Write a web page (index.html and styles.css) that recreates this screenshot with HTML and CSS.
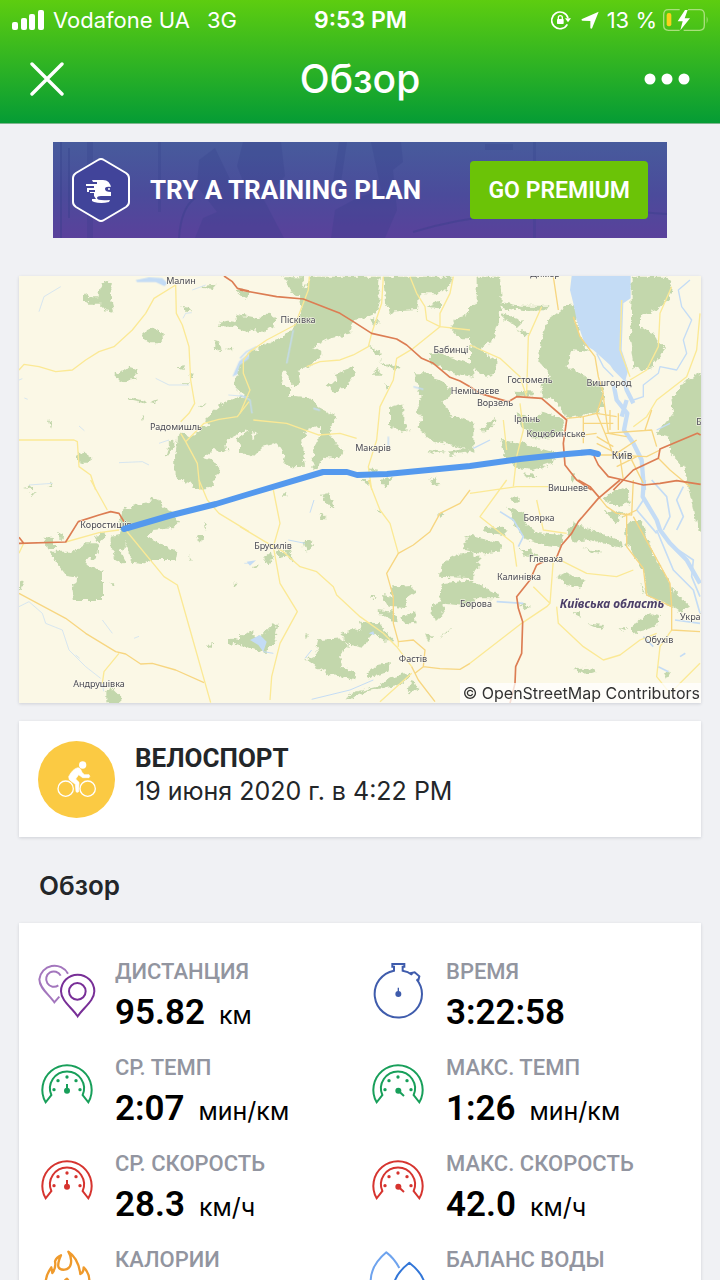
FILE: index.html
```html
<!DOCTYPE html>
<html lang="ru">
<head>
<meta charset="utf-8">
<meta name="viewport" content="width=device-width, initial-scale=1">
<title>Обзор</title>
<link rel="stylesheet" href="styles.css">
</head>
<body>
<div class="app">
  <header class="top">
    <div class="status">
      <div class="status-left">
        <svg class="signal" viewBox="0 0 32 20" aria-hidden="true"><rect x="0" y="12" width="6" height="8" rx="2"/><rect x="9" y="8" width="6" height="12" rx="2"/><rect x="17" y="4" width="6" height="16" rx="2"/><rect x="26" y="0" width="6" height="20" rx="2"/></svg>
        <span>Vodafone UA</span><span class="network">3G</span>
      </div>
      <span class="clock">9:53 PM</span>
      <div class="status-right">
        <svg class="lock" viewBox="0 0 60 60" aria-hidden="true"><path d="M49 43A25 25 0 1 1 51 24" fill="none" stroke="#fff" stroke-width="5"/><path d="M42 25h18l-9 12z"/><rect x="18" y="27" width="20" height="15" rx="2"/><path d="M22 28v-5a6 6 0 0 1 12 0v5" fill="none" stroke="#fff" stroke-width="4"/></svg>
        <svg class="arrow" viewBox="0 0 52 52" aria-hidden="true"><path d="M51 2L32 50q-3 3-5-1V29L4 28q-5-2-1-5z"/></svg>
        <span>13 %</span>
        <svg class="battery" viewBox="0 0 138 66" aria-hidden="true"><path d="M50 2H16Q2 2 2 17v32q0 15 14 15h34M75 2h35q14 0 14 15v32q0 15-14 15H62" fill="none" stroke="#a9e07c" stroke-width="4"/><path d="M131 22q6 11 0 22z" fill="#a9e07c"/><rect x="11" y="12" width="14" height="40" rx="6" fill="#f8d21c"/><path d="M66 3L44 37h15l-7 27 29-36H65L74 3z"/></svg>
      </div>
    </div>
    <div class="nav">
      <button class="icon-btn" aria-label="Закрыть"><svg class="close" viewBox="0 0 34 34"><path d="M2 2L32 32M32 2L2 32" stroke="#fff" stroke-width="3.4" stroke-linecap="round"/></svg></button>
      <h1>Обзор</h1>
      <button class="icon-btn" aria-label="Ещё"><svg class="more" viewBox="0 0 46 12"><circle cx="6" cy="6" r="5.5"/><circle cx="23" cy="6" r="5.5"/><circle cx="40" cy="6" r="5.5"/></svg></button>
    </div>
  </header>

  <main class="content">
    <section class="promo">
      <svg class="promo-art" viewBox="0 0 614 96" preserveAspectRatio="xMidYMid slice" aria-hidden="true">
        <g fill="#2f3a86" opacity=".2"><path d="M190 0h38l4 34-16 18-24-8-8-20z"/><path d="M146 18l16-12 24 50 24 0 22 42-10 28h-64l-16-30 8-20 14-6-20-26z"/><path d="M286 0h8l-6 40h-8zM318 0h30l2 20-10 8 4 40-12 28h-54l4-28 22-12 24-8z"/><path d="M34 0h6v96h-6zM105 0h3v70h-3zM480 0h3v96h-3zM432 2h28v6h-28z"/></g>
        <path d="M360 90Q460 60 614 72M8 0v96M16 6v70M126 96q2-30 16-40" fill="none" stroke="#2f3a86" stroke-width="2" opacity=".3"/>
      </svg>
      <svg class="promo-logo" viewBox="0 0 58 66" aria-hidden="true">
        <path d="M26 3q3-2 6 0l22 13q3 2 3 5v24q0 3-3 5L32 63q-3 2-6 0L4 50q-3-2-3-5V21q0-3 3-5z" fill="#41449a" stroke="#fff" stroke-width="2"/>
        <path d="M20 23h11q7 0 8 8v8H29q-4 0-4 2 0 3 13 2l-1 2q-8 2-15 0l-2-1v-2h4l-2-3v-3h-4v-1h5v-2h-8v-2h7v-2h-4v-2h7v-2h-4z" fill="#fff"/>
        <path d="M14 28h4M15 34h2" stroke="#fff" stroke-width="2"/><path d="M39 30q-6-1-6 2t6 3z" fill="#41449a"/><circle cx="37" cy="32" r="1" fill="#fff"/>
      </svg>
      <span class="promo-text">TRY A TRAINING PLAN</span>
      <button class="premium">GO PREMIUM</button>
    </section>

    <section class="card map">
      <svg viewBox="19 276 682 427" role="img" aria-label="Маршрут от Коростишева до Киева">
        <defs><filter id="ragged" x="0" y="0" width="1" height="1" color-interpolation-filters="sRGB"><feTurbulence type="fractalNoise" baseFrequency=".18" numOctaves="3" seed="4"/><feDisplacementMap in="SourceGraphic" scale="7" xChannelSelector="R" yChannelSelector="G"/></filter></defs>
        <rect x="19" y="276" width="682" height="427" fill="#fbf8e6"/>
        <g class="forest" filter="url(#ragged)">
          <path transform="translate(19 270) scale(.33333)" d="M248 40l20-8 12 14-6 22 4 30 8 30-30-4-8-20-40 0-16-14 0-14 12-4 8 10h26zM370 190l30-14 34 14 0 16-14 14-26 0-24-14zM290 310l20-8 18-12 28 8-10 16 4 12-26 4-20 6-14-8zM330 382l50 12 0 7-48-10zM392 396l22-8-6 12zM490 108l20 2 6 14-14-2zM595 160l30-8 65 10 0 24-40-14-50-4zM586 210l14 4 8 24-14 8-8-20zM622 232l20 8-14 2zM550 48l40-4-10 12-28-2zM645 60l45 4v24l-20-6zM172 556l24-8 20 14-4 16-30 0zM700 255L660 285 645 345 672 370 700 375zM700 380L660 380 612 400 555 450 570 460 530 490 510 500 490 488 478 495 468 560 470 620 500 640 520 630 560 660 580 640 600 600 585 570 555 560 580 540 625 545 620 510 650 495 700 470zM440 560l10-40 16-12 0 20-20 28zM655 505l45-30v90l-30-20zM88 445l12 15-4 14zM475 292l20-6-4 14zM512 310h8v14h-8zM484 340l30 0-10 5zM540 410l20-12-10 14zM368 438l8-2-4 16zM12 655l30-8 0 10zM88 645l16-8-6 12z"/>
          <path transform="translate(240 270) scale(.33333)" d="M210 20L420 20 415 60 425 90 405 130 370 145 340 150 330 190 270 205 220 230 250 250 210 290 175 300 180 340 160 350 150 330 130 295 120 340 150 350 150 380 210 385 240 415 290 440 285 460 270 470 275 500 310 545 300 565 250 560 235 595 217 595 220 535 240 500 240 465 200 480 185 520 195 590 160 592 130 580 135 555 110 520 70 530 40 560 20 545 0 545 0 500 40 510 50 490 20 480 36 460 36 400 10 370 0 370 0 280 30 250 60 230 130 200 165 165 185 120 180 80zM-10 132L60 145 80 125 105 140 100 170 70 185 -10 172zM130 22l60 0 0 60-30-10zM430 20L635 20 630 45 600 70 540 70 530 120 450 125 435 90zM700 130L650 145 630 175 660 205 700 205zM570 250L600 250 700 285 700 320 640 310 600 290 570 275zM520 310l50 0 20 20 30 10 20 30-30 25 20 40 70 20v90l-60-20-60-10-50-40 20-30-20-25 15-40zM285 315l60-25 0 15-30 50-40 10-15-20 30-10zM385 225l40 25-10 10zM415 270l70 25-20 10zM450 410l40-10 0 60 20 20-30 5-30-20zM420 630l40-8-15 22-25-2zM565 630l20-8 12 20-20 4zM390 150l15-5 12 14-12 6zM410 290l12 24-24 0zM560 110l40-15 0 20zM430 345l20 0-12 14zM385 595l30 4-10 14zM560 540l60 5-40 6zM620 545l70-10 0 12-60 8z"/>
          <path transform="translate(470 270) scale(.33333)" d="M20 20L90 20 95 90 85 160 70 210 25 240 0 220 0 110 20 100zM0 225L35 245 80 270 75 310 50 320 0 290zM90 95l60 12 90 0-20 14-60 2-60-8zM100 130l60 25-20 20-10-15-30-10zM145 180l30 10-10 10zM235 150L300 100 325 130 320 160 345 230 360 245 300 240 290 290 350 320 365 330 400 345 400 410 380 430 290 445 280 420 240 385 215 380 215 340 240 320 205 275 215 200zM485 20L590 20 605 50 600 80 560 120 510 140 510 175 550 190 585 240 545 290 520 300 490 290 480 200 485 90zM700 305L640 340 600 395 610 430 560 490 600 500 600 550 640 590 660 650 700 660zM215 425l60 20 10 40-50 20-50 0-20-30zM140 430l50 20-10 30-30-10zM135 362l60 3-5 14-55 2zM90 510l70 10 100 30-10 30-60 20-50-6-40-40zM35 480l40-40-6 30-30 20zM300 610l14 10-8 20zM160 610l40 5-20 15z"/>
          <path transform="translate(19 480) scale(.33333)" d="M105 215L160 215 200 190 235 190 240 215 225 240 200 235 200 255 252 272 252 360 165 360 160 325 178 290 140 285 95 225zM310 90L330 80 390 65 400 50 420 60 430 80 460 95 480 125 460 145 400 150 390 170 400 180 475 215 470 240 400 240 380 250 335 245 335 215 320 190 305 215 320 245 295 250 275 200 275 170 300 165zM75 170l30 5 0 30-25 0zM120 155l12 15-12 10zM225 165l30-5 5 10-20 20zM535 165l20 0-10 20zM505 0h60l-10 30-30-5zM630 475l30 5 40-30v50l-70-10zM560 495l22-2 0 14zM0 305l14-5-6 25-8 3zM262 630l16-8 29 28v20h-45zM275 310l14 0-10 12zM510 220l8 22-4 0zM30 40l20 0-8 8zM645 308h12v8h-12zM555 130l12 6-10 10z"/>
          <path transform="translate(240 480) scale(.33333)" d="M70 235l25-20 5 20-15 20zM110 215l20-5 8 20-20 5zM135 210l15 0 12 32-25-15zM0 465l60 5 40-40 15 5-15 60-25 25-75-30zM305 460L365 445 360 425 415 430 460 480 440 485 400 460 370 500 320 490zM235 480L310 475 325 500 300 520 305 560 350 580 345 600 260 580 195 540 235 520 230 500zM380 580l30-25 40-5-5 25-60 20zM330 640l80-20 40-25 60-15-20 30-110 25-60 25zM500 630l20-30 15 30-25 10zM450 320l60-5 20 20-30 20 0 30-55-5-20-35 30 5zM412 390l50 5 10 35-40-20zM480 410l45-20 5 40-35 0zM700 180l-30 10 5 20 25 5zM700 215L650 225 605 250 600 290 700 295zM605 310L700 300 700 380 600 370zM575 375l30-10 10 30-20 25-20-15zM240 45l25-5 20 45-30-20zM235 100l30 15-20 0zM190 180l10 0 20 15-20 20zM425 0h35l-20 20zM360 0h30l-5 15zM555 460l22 10-10 20zM600 475l30-30-5 12zM388 348l20 0-14 8zM36 262l22-6-12 14zM130 40h12v10h-12zM595 98l12 8-10 8zM195 460l8 6-6 14zM410 86l10 6-6 6z"/>
          <path transform="translate(470 480) scale(.33333)" d="M-10 165L95 190 90 215 40 220 -10 210zM-10 230h35l0 40-35 8zM-10 298l100 47-10 10-90 0zM40 145l60-5 10 25-60-5zM115 80l50 20 0 30 40 30 80 5-15 35-50-6-60-20-20-30zM290 155l20-25 60 20 90 40 0 15-100-25-50 5zM465 150l20-30 30 0 30 90 60 110 5 60-80-30-10-80-50-80zM610 330l50 50-30 15-30-20zM650 0h60v170l-30-30-10-50zM480 440l60-40 30 5-20 40-60 15zM350 430l50 5-5 15zM300 395l30 5 0 10zM315 570l30-10 35 15-30 10zM265 290l20-10 65 20-20 20-40-5zM420 40l50-20 10 50-30 10-50-20zM575 580l25-5-15 25zM150 210l30 0 30 20-40 0zM145 370l35 10-15 8zM120 55l20-6 10 16-14 4zM340 205l60 10-20 6zM510 310l16 30-8 0zM445 445l30 0-10 8zM400 90l60 10-20 30z"/>
        </g>
        <g class="water">
          <path transform="translate(470 270) scale(.33333)" d="M305 18L482 18 482 85 460 100 455 240 475 300 465 335 430 300 420 285 370 240 345 225 320 150 310 100 300 60z"/>
          <path transform="translate(19 270) scale(.33333)" d="M350 30l40-8 40 2 16 16-10 8-26-12-56 0zM690 250l-30 24-20 46 14-6 8-28 28-20z"/>
          <path transform="translate(240 480) scale(.33333)" d="M30 480l30-15 20 20-10 30-15-20zM20 245l28-4-18 16zM386 460l14-6 4 12z"/>
        </g>
        <g class="river">
          <path transform="translate(470 270) scale(.33333)" stroke-width="13" d="M462 330L470 360 490 400M430 340L440 390 472 430 462 480 490 520 515 570 522 660M470 390L455 440"/>
          <path transform="translate(470 270) scale(.33333)" stroke-width="4" d="M660 30L625 60 635 110 665 150 640 210 650 250 620 300 570 290 565 310 520 345 520 380 490 390M380 250L400 290 430 320M10 535L60 510M560 480L600 460"/>
          <path transform="translate(470 480) scale(.33333)" stroke-width="13" d="M522 0L518 50 560 120 570 150 600 190 650 240 690 310"/>
          <path transform="translate(470 480) scale(.33333)" stroke-width="5" d="M545 0L590 50 600 110 580 150M560 150L610 270 670 330 690 400M610 200L670 240 665 290 690 350M520 60L500 90 560 160M640 20L620 60 640 110 620 150M615 420L690 430M90 95L130 120 160 170 145 200M80 365L160 370M520 470l30 30M565 560l30 15M630 530l16-10"/>
          <path transform="translate(19 480) scale(.33333)" stroke-width="2" d="M0 380L30 365 70 400 80 430 130 450 150 510 200 560 245 595M250 420L280 460M345 475l15-6M250 610l4 24M170 525l12 10M690 250h-14"/>
          <path transform="translate(240 480) scale(.33333)" stroke-width="3" d="M210 98L222 60M70 515L100 520M195 535L215 510M215 658L330 630 400 600M145 180l50 10"/>
          <path transform="translate(240 270) scale(.33333)" stroke-width="4" d="M0 265L20 245 50 230M0 375L30 390 36 430M140 280L160 180M445 500v30M520 350l30 8M220 415l20 6"/>
          <path transform="translate(19 270) scale(.33333)" stroke-width="2" d="M492 145L500 130 518 128M628 375L690 380M60 125L75 80 125 50M0 330l10-4M16 384l10 4M180 468l16 14M560 45L520 60M410 325L450 345 510 345M300 578L370 575 390 585M420 520L450 510M30 645L100 640"/>
        </g>
        <g class="road">
          <path transform="translate(19 270) scale(.33333)" d="M0 300L15 283 60 290 110 305 160 300 200 270 240 245 285 230 340 180 380 130 405 85 470 45L472 130 490 165 510 230 515 330 527 400 510 430 485 455M0 510L165 510 175 515 180 590 215 615 230 660M690 395L655 440 600 448 555 460 500 515 535 580 543 660M500 515l-15-25"/>
          <path transform="translate(240 270) scale(.33333)" d="M208 20L205 60 165 165 80 210 30 245 10 270 10 310 30 360 0 430M40 450L140 460 235 495 300 490 350 505M395 190L425 100 430 20M395 190L385 230 340 255 300 270 240 275 200 290M510 20L530 70 555 110 560 150 600 170 690 180M600 170L600 130 630 70 640 20M600 170L520 235 470 265 460 330 420 410 410 510 385 590 395 660"/>
          <path transform="translate(470 270) scale(.33333)" d="M170 370L175 200 215 110M0 225L90 265 150 320 170 380M605 50L570 130 565 230 530 300 480 330M690 130L680 240 650 320 560 390 530 440 490 470M455 90L450 240 480 320M150 400L160 480 140 560 130 650M100 450L110 540"/>
          <path transform="translate(19 480) scale(.33333)" d="M215 0L265 90M140 186L240 158 300 150M320 150L435 290 475 315 575 668M300 520L255 575 250 610M540 0L565 60 600 100 690 155M0 220l14-30"/>
          <path transform="translate(240 480) scale(.33333)" d="M0 140L75 185 130 215 180 260 230 275 280 320 290 345 360 410 430 460 470 500 515 560M100 30L120 130 100 200 120 310 172 395 120 490 95 590 90 660M385 0L420 90 450 130 475 220M515 580L420 665M475 485v15"/>
          <path transform="translate(470 480) scale(.33333)" d="M250 240L240 370 230 380 155 430 0 550M240 370L190 320M260 380L265 430 340 500 400 540 450 525 510 480 560 460M250 230L350 280 440 290 490 270M0 40L140 20 240 20M110 0L30 110 130 190 140 260M605 450L570 500 560 590 600 640 690 550M200 60l20 90 70 10"/>
        </g>
        <g class="road secondary">
          <path transform="translate(470 270) scale(.33333)" d="M250 20L265 120M310 140L330 200 375 260 385 320 400 370 380 430 405 490 430 555M290 445L340 440 380 430 440 440M405 490L545 480 560 530M390 555L430 555 530 560 570 540M565 565L600 600 660 650M400 380L415 490 470 500M340 460h90M380 500l50 30M420 420v60M445 430v50M300 500l80-10M450 560l10 70M480 560l40 80M440 590l60-30M545 420l-20 60M380 520l60 30 60-40M340 440v80"/>
          <path transform="translate(470 480) scale(.33333)" d="M470 100L470 200 520 265 530 345 605 380 605 450 690 455M390 55L410 80 440 100 485 105 490 0M490 110L600 310 605 380M460 110l40-20"/>
          <path transform="translate(19 480) scale(.33333)" d="M0 340L140 415 200 460 290 515 320 522 365 552 400 550 470 570 555 608"/>
          <path transform="translate(240 480) scale(.33333)" d="M690 30L660 70 600 100 570 155 520 195 475 220 440 280 460 350 460 430 475 485 520 480 555 510 550 560 525 580M550 560L600 566 660 568 690 550M515 560L535 600 585 665"/>
        </g>
        <g class="highway">
          <path transform="translate(19 270) scale(.33333)" d="M615 18L640 35 655 55 690 63"/>
          <path transform="translate(240 270) scale(.33333)" d="M0 60L110 80 190 87 300 130 340 155 395 190 470 207 500 225 545 265 580 280 630 322 660 333 690 350"/>
          <path transform="translate(470 270) scale(.33333)" d="M0 350L30 370 90 388 115 395 140 380 215 385 290 450 280 520 285 585 320 630 365 660M372 558L385 585 415 620 460 630 520 645 570 640 620 632 692 643M692 495L682 490 570 537 565 565 490 600 430 660"/>
          <path transform="translate(19 480) scale(.33333)" d="M0 172L14 190M0 190L140 186 178 125 240 105 275 95 300 100 315 125"/>
          <path transform="translate(470 480) scale(.33333)" d="M325 0L360 20 390 55M450 0L385 55 325 125 305 160 275 195 260 232M220 245L200 255 180 300 140 350 145 385 158 425 155 520 137 560 135 610 120 670"/>
        </g>
        <g class="places">
          <text x="181" y="284">Малин</text><text x="298" y="323">Пісківка</text><text x="451" y="353">Бабинці</text><text x="475" y="394">Немішаєве</text><text x="495" y="406">Ворзель</text><text x="530" y="383">Гостомель</text><text x="609" y="386">Вишгород</text><text x="527" y="422">Ірпінь</text><text x="556" y="437">Коцюбинське</text><text class="city" x="622" y="459">Київ</text><text x="176" y="430">Радомишль</text><text x="373" y="451">Макарів</text><text x="568" y="491">Вишневе</text><text x="539" y="521">Боярка</text><text x="546" y="562">Глеваха</text><text x="519" y="580">Калинівка</text><text x="476" y="607">Борова</text><text x="106" y="528">Коростишів</text><text x="273" y="549">Брусилів</text><text x="413" y="662">Фастів</text><text x="99" y="687">Андрушівка</text><text x="659" y="643">Обухів</text><text x="699" y="620">Українка</text><text x="715" y="425">Бровари</text><text x="545" y="277">Димер</text>
          <text class="region" x="612" y="608">Київська область</text>
        </g>
        <path d="M124 529L172 515 216 504 249 494 323 472 347 472 357 475 387 474 470 466 520 459 567 454 590 452 598 454" fill="none" stroke="#5499ee" stroke-width="6" stroke-linecap="round" stroke-linejoin="round"/>
      </svg>
      <small class="credit">© OpenStreetMap Contributors</small>
    </section>

    <section class="card activity">
      <svg class="badge" viewBox="0 0 231 231" aria-hidden="true">
        <circle cx="115.500" cy="115.500" r="115.500" fill="#fbca43"/>
        <g fill="none" stroke="#fff" stroke-width="4"><circle cx="83" cy="143" r="23"/><circle cx="149" cy="143" r="23"/></g>
        <circle cx="134" cy="72" r="11" fill="#fff"/>
        <path d="M92 107q12-24 28-27 8 0 12 14l7 7h14q5 5 0 9h-19l-12-9-9 13 10 10-1 28q-4 4-8 0l-2-22-18-14z" fill="#fff" stroke="#fff" stroke-width="2" stroke-linejoin="round"/>
      </svg>
      <div class="activity-text"><h2>ВЕЛОСПОРТ</h2><p>19 июня 2020 г. в 4:22 PM</p></div>
    </section>

    <h2 class="section-title">Обзор</h2>

    <section class="card stats">
      <div class="stat">
        <svg viewBox="54 60 180 180" fill="none" stroke-width="6" aria-hidden="true"><path d="M147 101A46 46 0 0 0 61 118C61 145 92 165 106 187L121 170M125 107A23 23 0 1 0 118 136" stroke="#a376bd"/><path d="M176 229C160 204 126 182 126 154A50 50 0 0 1 226 154C226 182 192 204 176 229z" stroke="#782f97"/><circle cx="175" cy="154" r="25" stroke="#782f97"/></svg>
        <div><h3>ДИСТАНЦИЯ</h3><p><strong>95.82</strong><span>км</span></p></div>
      </div>
      <div class="stat">
        <svg viewBox="54 60 180 180" fill="none" stroke="#3f5cac" stroke-width="6" aria-hidden="true"><path d="M132 92V80H127V72H163V80H158V92Q174 94 186 104L184 99 194 97 208 109 205 121 200 118Q216 138 216 162A71 71 0 1 1 132 92z"/><circle cx="145" cy="162" r="6" fill="#3f5cac"/><path d="M145 160V143" stroke-width="4"/></svg>
        <div><h3>ВРЕМЯ</h3><p><strong>3:22:58</strong></p></div>
      </div>
      <div class="stat pace">
        <svg viewBox="54 348 180 180" aria-hidden="true"><path class="arc" d="M80 487A74 74 0 1 1 208 487L191 465A51 51 0 1 0 97 465z"/><g class="dots"><circle cx="105" cy="449" r="5"/><circle cx="117" cy="422" r="5"/><circle cx="144" cy="411" r="5"/><circle cx="171" cy="422" r="5"/><circle cx="183" cy="449" r="5"/><circle cx="144" cy="452" r="9"/></g><path class="needle" d="M144 452V432"/></svg>
        <div><h3>СР. ТЕМП</h3><p><strong>2:07</strong><span>мин/км</span></p></div>
      </div>
      <div class="stat pace">
        <svg viewBox="54 348 180 180" aria-hidden="true"><path class="arc" d="M80 487A74 74 0 1 1 208 487L191 465A51 51 0 1 0 97 465z"/><g class="dots"><circle cx="105" cy="449" r="5"/><circle cx="117" cy="422" r="5"/><circle cx="144" cy="411" r="5"/><circle cx="171" cy="422" r="5"/><circle cx="183" cy="449" r="5"/><circle cx="145" cy="452" r="9"/></g><path class="needle" d="M145 452L162 468"/></svg>
        <div><h3>МАКС. ТЕМП</h3><p><strong>1:26</strong><span>мин/км</span></p></div>
      </div>
      <div class="stat speed">
        <svg viewBox="54 348 180 180" aria-hidden="true"><path class="arc" d="M80 487A74 74 0 1 1 208 487L191 465A51 51 0 1 0 97 465z"/><g class="dots"><circle cx="105" cy="449" r="5"/><circle cx="117" cy="422" r="5"/><circle cx="144" cy="411" r="5"/><circle cx="171" cy="422" r="5"/><circle cx="183" cy="449" r="5"/><circle cx="144" cy="452" r="9"/></g><path class="needle" d="M144 452V432"/></svg>
        <div><h3>СР. СКОРОСТЬ</h3><p><strong>28.3</strong><span>км/ч</span></p></div>
      </div>
      <div class="stat speed">
        <svg viewBox="54 348 180 180" aria-hidden="true"><path class="arc" d="M80 487A74 74 0 1 1 208 487L191 465A51 51 0 1 0 97 465z"/><g class="dots"><circle cx="105" cy="449" r="5"/><circle cx="117" cy="422" r="5"/><circle cx="144" cy="411" r="5"/><circle cx="171" cy="422" r="5"/><circle cx="183" cy="449" r="5"/><circle cx="145" cy="452" r="9"/></g><path class="needle" d="M145 452L162 468"/></svg>
        <div><h3>МАКС. СКОРОСТЬ</h3><p><strong>42.0</strong><span>км/ч</span></p></div>
      </div>
      <div class="stat">
        <svg viewBox="54 924 180 180" fill="none" stroke="#ef9a2c" stroke-width="7" stroke-linejoin="round" aria-hidden="true"><path d="M140 1084C96 1080 76 1050 81 1018Q84 1000 97 982L100 999Q112 984 108 964 112 952 126 946 116 968 118 980C124 994 150 992 155 974Q160 954 148 935 178 954 184 1002 194 998 194 982 212 1000 211 1024C208 1060 180 1082 140 1084zM124 1050Q122 1034 144 1016 160 1036 156 1056"/></svg>
        <div><h3>КАЛОРИИ</h3></div>
      </div>
      <div class="stat">
        <svg viewBox="54 924 180 180" fill="none" stroke-width="6" stroke-linejoin="round" aria-hidden="true"><path d="M148 984Q132 954 109 937 62 976 62 1024 64 1050 96 1058" stroke="#6ea3ee"/><path d="M178 968Q132 1004 130 1044A48 48 0 0 0 226 1044Q224 1004 178 968z" stroke="#3276d8"/></svg>
        <div><h3>БАЛАНС ВОДЫ</h3></div>
      </div>
    </section>
  </main>
</div>
</body>
</html>
```
FILE: styles.css
```css
* { box-sizing: border-box; }
body, h1, h2, h3, p { margin: 0; }
svg { display: block; flex: none; }
button { font: inherit; border: 0; cursor: pointer; }

body {
  background: #f0f1f4;
  color: #232629;
  font-family: Inter, "Noto Sans", sans-serif;
}
.app { height: 100vh; display: flex; flex-direction: column; overflow: hidden; }

.top {
  flex: none;
  background: linear-gradient(#5dcd10, #059c35);
  border-bottom: 1px solid #7fb58f;
  color: #fff;
  fill: #fff;
}
.status {
  display: grid;
  grid-template-columns: 1fr auto 1fr;
  align-items: center;
  height: 39px;
  padding: 0 11px 0 12px;
  font-size: 22px;
}
.status-left, .status-right { display: flex; align-items: center; }
.status-left { gap: 9px; }
.status-right { justify-content: flex-end; gap: 6px; }
.network { margin-left: 8px; }
.clock { font-size: 23px; font-weight: 600; }
.signal { width: 32px; }
.lock { width: 20px; }
.arrow { width: 18px; margin: 0 2px 0 4px; }
.battery { width: 46px; }
.nav {
  display: flex;
  align-items: center;
  justify-content: space-between;
  height: 84px;
  padding: 0 30px 4px;
}
.nav h1 { font-size: 39px; font-weight: 500; line-height: 48px; }
.icon-btn { padding: 0; background: none; color: inherit; fill: inherit; }
.close { width: 34px; margin-right: 12px; }
.more { width: 46px; }

.content { flex: 1; min-height: 0; overflow: hidden; padding: 18px 19px 0; }

.promo {
  position: relative;
  display: flex;
  align-items: center;
  height: 96px;
  margin: 0 34px 38px;
  padding: 0 19px;
  background: linear-gradient(#475b9c, #4b4b9b 55%, #5a419b);
  color: #fff;
}
.promo-art { position: absolute; inset: 0; width: 100%; height: 100%; }
.promo-logo, .promo-text, .premium { position: relative; }
.promo-logo { width: 58px; }
.promo-text { margin: 0 auto 0 20px; font: 700 26px Roboto, sans-serif; }
.premium {
  height: 58px;
  padding: 0 18px;
  border-radius: 4px;
  background: #6bc307;
  color: #fff;
  font: 600 23px Roboto, sans-serif;
}

.card { background: #fff; box-shadow: 0 1px 3px rgba(40, 45, 60, .16); }

.map { position: relative; margin-bottom: 18px; }
.map svg { width: 100%; }
.forest { fill: #c3d7ac; }
.water { fill: #c4dcf5; }
.river { fill: none; stroke: #c4dcf5; stroke-linejoin: round; }
.road { fill: none; stroke: #fbe995; stroke-width: 4; stroke-linejoin: round; }
.secondary { stroke: #f7d681; }
.highway { fill: none; stroke: #dc7d53; stroke-width: 5; stroke-linejoin: round; }
.places {
  fill: #4a4a52;
  stroke: #fdfbf0;
  stroke-width: 1px;
  paint-order: stroke;
  font: 9px "Noto Sans", sans-serif;
  text-anchor: middle;
}
.city { font-size: 10px; }
.region { fill: #4d4068; font: italic 700 12px "Noto Sans", sans-serif; }
.credit {
  position: absolute;
  right: 0;
  bottom: 0;
  padding: 0 1px 0 3px;
  background: rgba(255, 255, 255, .75);
  color: #333;
  font-size: 16px;
  line-height: 20px;
}

.activity {
  display: flex;
  align-items: center;
  gap: 20px;
  min-height: 116px;
  padding: 0 19px;
}
.badge { width: 77px; }
.activity h2 { font: 700 26px/33px Roboto, sans-serif; }
.activity p { font-size: 25px; line-height: 33px; }
.activity-text { padding-bottom: 9px; }

.section-title { padding: 32px 20px 20px; font-size: 26px; font-weight: 600; line-height: 34px; }

.stats {
  display: grid;
  grid-template-columns: 1fr 1fr;
  grid-auto-rows: minmax(96px, auto);
  padding: 37px 2px 37px 18px;
}
.stat { display: flex; align-items: flex-start; gap: 18px; }
.stat svg { width: 60px; }
.stat h3 { color: #9295a0; font: 500 22px/24px Roboto, sans-serif; }
.stat p { display: flex; align-items: baseline; gap: 14px; padding-top: 5px; color: #000; line-height: 48px; }
.stat strong { font: 600 35px/48px Roboto, sans-serif; }
.stat span { font-size: 25px; }
.pace { color: #189f5a; }
.speed { color: #d6342f; }
.arc { fill: none; stroke: currentColor; stroke-width: 6; }
.dots { fill: currentColor; }
.needle { stroke: currentColor; stroke-width: 6; }
```
